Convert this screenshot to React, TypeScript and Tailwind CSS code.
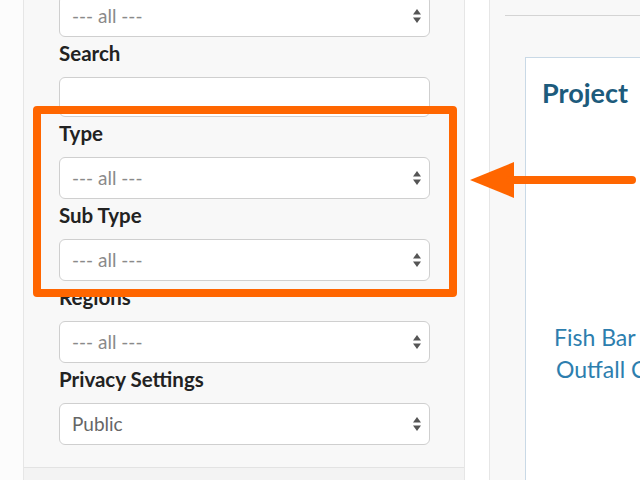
import React from "react";

const font = { fontFamily: "Lato, 'Open Sans', sans-serif" };

function Caret() {
  return (
    <svg width="10" height="16" viewBox="0 0 10 16" className="shrink-0">
      <path d="M5 1 L9 6.5 H1 Z" fill="#555" />
      <path d="M5 15 L9 9.5 H1 Z" fill="#555" />
    </svg>
  );
}

function Select({ value, dark }: { value: string; dark?: boolean }) {
  return (
    <div className="flex h-[42px] w-[371px] items-center justify-between rounded-[6px] border border-[#cfcfcf] bg-white pl-[12px] pr-[7px]">
      <span className={`text-[19px] ${dark ? "text-[#666]" : "text-[#8a8a8a]"}`}>{value}</span>
      <Caret />
    </div>
  );
}

function Label({ children }: { children: React.ReactNode }) {
  return (
    <div className="mt-[5px] mb-[12px] h-[23px] text-[20.5px] font-bold leading-[23px] text-[#222]">
      {children}
    </div>
  );
}

export default function App() {
  return (
    <div className="relative flex h-[480px] w-[640px] overflow-hidden bg-[#fcfcfc]" style={font}>
      {/* Left filter panel */}
      <div className="ml-[23px] flex w-[442px] shrink-0 flex-col border-x border-[#e6e6e6]">
        <div className="flex flex-col bg-[#f8f8f8] pl-[35px] pb-[22px]">
          <div className="-mt-[5px]">
            <Select value="--- all ---" />
          </div>
          <Label>Search</Label>
          <div className="h-[40px] w-[371px] rounded-[6px] border border-[#cfcfcf] bg-white" />
          <Label>Type</Label>
          <Select value="--- all ---" />
          <Label>Sub Type</Label>
          <Select value="--- all ---" />
          <Label>Regions</Label>
          <Select value="--- all ---" />
          <Label>Privacy Settings</Label>
          <Select value="Public" dark />
        </div>
        <div className="flex-1 border-t border-[#e3e3e3] bg-[#f3f3f3]" />
      </div>

      {/* Gap strip */}
      <div className="w-[24px] shrink-0 bg-white" />

      {/* Right column */}
      <div className="flex min-w-0 flex-1 flex-col border-l border-[#e6e6e6] bg-[#f8f8f8] pl-[15px]">
        <div className="mt-[15px] border-t border-[#d4d4d4]" />
        <div className="ml-[20px] mt-[41px] flex flex-1 flex-col border-l border-t border-[#c9d9e6] bg-white pl-[16px] pt-[16px]">
          <div className="text-[27px] font-bold leading-[38px] text-[#1d5b7c]">Project</div>
          <div className="mt-[209px] ml-[12px] whitespace-nowrap text-[23px] leading-[32px] text-[#2d7eae]">
            <div>Fish Bar</div>
            <div className="ml-[2px]">Outfall C</div>
          </div>
        </div>
      </div>

      {/* Highlight box annotation */}
      <div className="pointer-events-none absolute left-[33px] top-[106px] h-[191px] w-[424px] rounded-[4px] border-[8px] border-[#ff6600]" />

      {/* Arrow annotation */}
      <svg className="pointer-events-none absolute left-[466px] top-[158px]" width="174" height="44" viewBox="0 0 174 44">
        <path d="M4 22 L48 4 L48 40 Z" fill="#ff6600" />
        <line x1="44" y1="22" x2="166" y2="22" stroke="#ff6600" strokeWidth="8" strokeLinecap="round" />
      </svg>
    </div>
  );
}
